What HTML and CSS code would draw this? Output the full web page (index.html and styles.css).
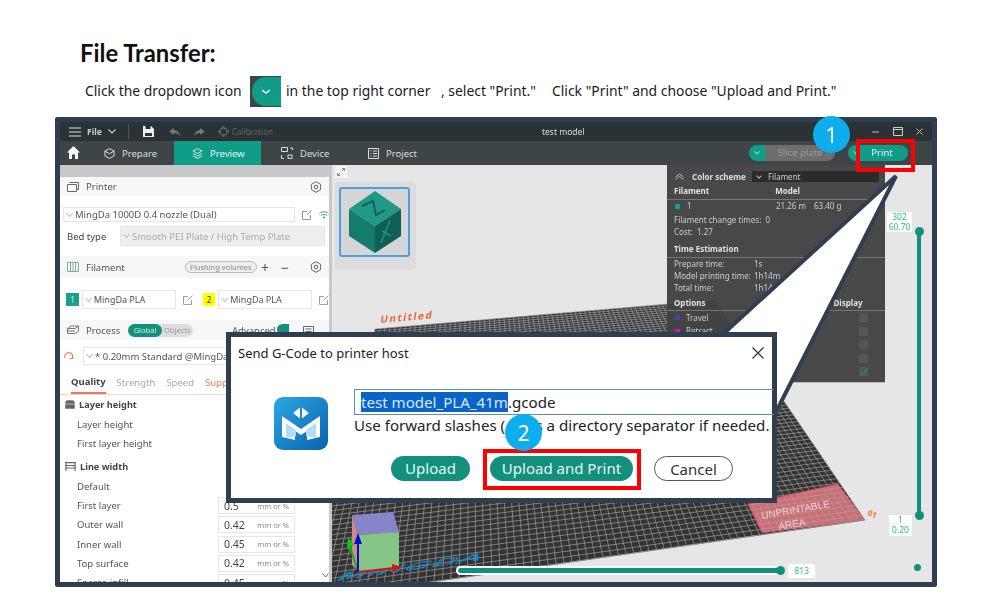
FILE: index.html
```html
<!DOCTYPE html>
<html lang="en">

<head>
    <meta charset="UTF-8">
    <title>File Transfer</title>
    <link rel="stylesheet" href="styles.css">
</head>

<body>
    <div class="page">
        <h1>File Transfer:</h1>
        <div class="steps">
            <span class="step-a">Click the dropdown icon</span>
            <span class="drop-sample"><i></i><svg width="10" height="6" viewBox="0 0 10 6"><path d="M1 1l4 3 4-3" fill="none" stroke="#fff" stroke-width="1.4"/></svg></span>
            <span class="step-b">in the top right corner</span>
            <span class="step-c">, select "Print."</span>
            <span class="step-d">Click "Print" and choose "Upload and Print."</span>
        </div>

        <div class="window">
            <!-- title bar -->
            <div class="titlebar">
                <svg class="tb-burger" width="12" height="10" viewBox="0 0 12 10"><path d="M0 1h12M0 5h12M0 9h12" stroke="#ddd" stroke-width="1.2"/></svg>
                <span class="tb-file">File</span>
                <svg class="tb-chev" width="8" height="5" viewBox="0 0 8 5"><path d="M.5 .5L4 4 7.500 .5" fill="none" stroke="#ccc" stroke-width="1.2"/></svg>
                <span class="tb-sep"></span>
                <svg class="tb-save" width="11" height="11" viewBox="0 0 11 11"><path d="M0 0h8l3 3v8H0z" fill="#eee"/><path d="M2.500 0h5v3h-5z M2 7h7v3H2z" fill="#2a3236"/></svg>
                <svg class="tb-undo" width="11" height="8" viewBox="0 0 11 8"><path d="M5 0L0 3.500 5 7V5c2.500 0 4 .6 6 3-.4-3.500-2.500-5.500-6-6z" fill="#777"/></svg>
                <svg class="tb-redo" width="11" height="8" viewBox="0 0 11 8"><path d="M6 0l5 3.500L6 7V5C3.500 5 2 5.600 0 8c.4-3.500 2.500-5.500 6-6z" fill="#777"/></svg>
                <svg class="tb-gear" width="11" height="11" viewBox="0 0 11 11"><circle cx="5.500" cy="5.500" r="3.600" fill="none" stroke="#666" stroke-width="1.500"/><path d="M5.500 0v2M5.500 9v2M0 5.500h2M9 5.500h2" stroke="#666" stroke-width="1.800"/></svg>
                <span class="tb-calib">Calibration</span>
                <span class="tb-title">test model</span>
                <svg class="tb-min" width="7" height="2" viewBox="0 0 7 2"><path d="M0 1h7" stroke="#bbb"/></svg>
                <svg class="tb-max" width="10" height="9" viewBox="0 0 10 9"><path d="M.5 .5h9v8h-9zM.5 2.500h9" fill="none" stroke="#ccc"/></svg>
                <svg class="tb-close" width="7" height="7" viewBox="0 0 7 7"><path d="M.5 .5l6 6M6.500 .5l-6 6" stroke="#bbb"/></svg>
            </div>

            <!-- tab bar -->
            <div class="tabbar">
                <svg class="home" width="13" height="13" viewBox="0 0 13 13"><path d="M6.500 0L13 6.500h-2V13H8V8.500H5V13H2V6.500H0z" fill="#fff"/></svg>
                <div class="tab tab-prepare"><svg width="11" height="11" viewBox="0 0 11 11"><path d="M5.500 .6l4.600 2.500v4.800L5.500 10.400 .9 7.900V3.100zM.9 3.100l4.600 2.600 4.600-2.600" fill="none" stroke="#ddd"/></svg>Prepare</div>
                <div class="tab tab-preview"><svg width="11" height="11" viewBox="0 0 11 11"><path d="M5.500 .6l4.600 2.400-4.600 2.400L.9 3zM.9 5.500l4.600 2.400 4.600-2.400M.9 8l4.600 2.400L10.100 8" fill="none" stroke="#cdeee8"/></svg>Preview</div>
                <div class="tab tab-device"><svg width="12" height="12" viewBox="0 0 12 12"><path d="M.5 .5h6v4h-6zM7 8h4v3.500H7zM9 1h2.500v2M.5 8v3.500H3" fill="none" stroke="#ddd"/></svg>Device</div>
                <div class="tab tab-project"><svg width="11" height="11" viewBox="0 0 11 11"><path d="M.5 .5h10v10H.5zM2.500 3h1M5 3h4M2.500 5.500h1M5 5.500h4M2.500 8h1M5 8h4" fill="none" stroke="#ddd"/></svg>Project</div>
                <div class="slice-btn"><span class="btn-drop"><svg width="6" height="4" viewBox="0 0 6 4"><path d="M.5 .5L3 3 5.500 .5" fill="none" stroke="#fff"/></svg></span><span class="slice-label">Slice plate</span></div>
                <div class="print-btn"><span class="btn-drop"><svg width="6" height="4" viewBox="0 0 6 4"><path d="M.5 .5L3 3 5.500 .5" fill="none" stroke="#fff"/></svg></span><span class="print-label">Print</span></div>
            </div>

            <div class="main">
                <!-- left settings panel -->
                <div class="side">
                    <div class="side-strip"></div>
                    <div class="side-head head-printer">
                        <svg width="12" height="10" viewBox="0 0 12 10"><path d="M2.500 .5h9v7h-2M.5 2.500h9v7h-9z" fill="none" stroke="#667"/></svg>
                        <span>Printer</span>
                        <svg class="cog" width="12" height="12" viewBox="0 0 12 12"><path d="M6 .7l4.600 2.650v5.300L6 11.300 1.400 8.650v-5.300z" fill="none" stroke="#666"/><circle cx="6" cy="6" r="1.800" fill="none" stroke="#666"/></svg>
                    </div>
                    <div class="printer-row">
                        <div class="select select-printer"><em></em>MingDa 1000D 0.4 nozzle (Dual)</div>
                        <svg class="edit" width="10" height="10" viewBox="0 0 10 10"><path d="M8.500 5v4.500h-8v-8H5M5 5l4.500-4.500" fill="none" stroke="#999"/></svg>
                        <svg class="wifi" width="10" height="8" viewBox="0 0 10 8"><path d="M.5 2.500c2.500-2.300 6.500-2.300 9 0M2.200 4.500c1.500-1.300 4.100-1.300 5.600 0" fill="none" stroke="#17a58e"/><circle cx="5" cy="6.500" r="1" fill="#17a58e"/></svg>
                    </div>
                    <div class="bed-row">
                        <span class="bed-label">Bed type</span>
                        <div class="select select-bed"><em></em>Smooth PEI Plate / High Temp Plate</div>
                    </div>
                    <div class="side-head head-filament">
                        <svg width="12" height="10" viewBox="0 0 12 10"><path d="M.5 .5h11v9H.5zM3.500 .5v9M6 .5v9M8.500 .5v9" fill="none" stroke="#8aa"/></svg>
                        <span>Filament</span>
                        <span class="flush">Flushing volumes</span>
                        <span class="plus">+</span>
                        <span class="minus">−</span>
                        <svg class="cog" width="12" height="12" viewBox="0 0 12 12"><path d="M6 .7l4.600 2.650v5.300L6 11.300 1.400 8.650v-5.300z" fill="none" stroke="#666"/><circle cx="6" cy="6" r="1.800" fill="none" stroke="#666"/></svg>
                    </div>
                    <div class="filament-row">
                        <span class="chip chip-one">1</span>
                        <div class="select select-fil"><em></em>MingDa PLA</div>
                        <svg class="edit" width="10" height="10" viewBox="0 0 10 10"><path d="M8.500 5v4.500h-8v-8H5M5 5l4.500-4.500" fill="none" stroke="#999"/></svg>
                        <span class="chip chip-two">2</span>
                        <div class="select select-fil"><em></em>MingDa PLA</div>
                        <svg class="edit" width="10" height="10" viewBox="0 0 10 10"><path d="M8.500 5v4.500h-8v-8H5M5 5l4.500-4.500" fill="none" stroke="#999"/></svg>
                    </div>
                    <div class="side-head head-process">
                        <svg width="12" height="10" viewBox="0 0 12 10"><path d="M.5 3.500L4 1h7.500L8 3.500zM.5 3.500v2.500h7.500M.5 6v2.500h7.500l3.500-2.500V1" fill="none" stroke="#777"/></svg>
                        <span>Process</span>
                        <div class="toggle-pair"><b>Global</b><i>Objects</i></div>
                        <span class="advanced">Advanced</span>
                        <span class="adv-switch"></span>
                        <svg class="adv-icon" width="11" height="9" viewBox="0 0 11 9"><path d="M.5 .5h10v8H.5zM2.500 3h6M2.500 5.500h6" fill="none" stroke="#666"/></svg>
                    </div>
                    <div class="preset-row">
                        <svg width="10" height="10" viewBox="0 0 10 10"><path d="M1 7a4 4 0 1 1 7.500 0M8.500 4.500V7.500H6" fill="none" stroke="#f0765a" stroke-width="1.100"/></svg>
                        <div class="select select-preset"><em></em>* 0.20mm Standard @MingDa 1000D</div>
                    </div>
                    <div class="tabs-small">
                        <span class="on">Quality</span>
                        <span>Strength</span>
                        <span>Speed</span>
                        <span class="warn">Support</span>
                    </div>
                    <div class="group-head"><svg width="10" height="9" viewBox="0 0 10 9"><path d="M2 0h6l2 2v7H0V2zM0 4h10" fill="#666" stroke="#fff" stroke-width=".5"/></svg>Layer height</div>
                    <div class="param"><span>Layer height</span></div>
                    <div class="param"><span>First layer height</span></div>
                    <div class="group-head"><svg width="11" height="9" viewBox="0 0 11 9"><path d="M0 .6h11M0 3.500h11M0 6h11M1 .6V9M10 .6V9" fill="none" stroke="#666" stroke-width="1.100"/></svg>Line width</div>
                    <div class="param"><span>Default</span></div>
                    <div class="param"><span>First layer</span><div class="num">0.5<small>mm or %</small></div></div>
                    <div class="param"><span>Outer wall</span><div class="num">0.42<small>mm or %</small></div></div>
                    <div class="param"><span>Inner wall</span><div class="num">0.45<small>mm or %</small></div></div>
                    <div class="param"><span>Top surface</span><div class="num">0.42<small>mm or %</small></div></div>
                    <div class="param"><span>Sparse infill</span><div class="num">0.45<small>mm or %</small></div></div>
                    <svg class="side-more" width="7" height="5" viewBox="0 0 7 5"><path d="M.5 .5L3.500 4 6.500 .5" fill="none" stroke="#666"/></svg>
                </div>

                <!-- 3d view -->
                <div class="view">
                    <svg class="scene" width="600" height="418" viewBox="0 0 600 418">
                        <polygon points="43,164 383,135 533,355 -27,435" fill="#333"/>
                        <polygon points="416,339 506,319 533,355 430,368" fill="#cf6b73"/>
                        <g id="bed-grid" stroke="#a4a4a4" stroke-width=".65"></g>
                        <path d="M416 339L506 319M416 339L430 368" stroke="#e0404a" fill="none"/>
                        <path d="M533 355L-27 435" stroke="#8a8a8a"/>
                        <text class="bed-title" transform="translate(48 158) rotate(-5) skewX(-14)">Untitled</text>
                        <text class="bed-brand" transform="matrix(2.500 -.36 -1 .9 3 416)">MINGDA</text>
                        <text class="bed-warn" transform="translate(430 354) rotate(-10)">UNPRINTABLE</text>
                        <text class="bed-warn" transform="translate(447 365) rotate(-10)">AREA</text>
                        <text class="bed-num" transform="translate(535 350) rotate(22)">01</text>
                        <polygon points="20,350 61,347 67,367 26,370" fill="#8585c8"/>
                        <polygon points="20,350 26,370 26,405 20,400" fill="#d08a8a"/>
                        <polygon points="26,370 67,367 67,403 26,407" fill="#85c585"/>
                        <path d="M26 406L18 382" stroke="#0fb40f" stroke-width="2"/>
                        <polygon points="15,384 22,380 16,372" fill="#0fc80f"/>
                        <path d="M26 407V376" stroke="#0a0ad2" stroke-width="2"/>
                        <polygon points="22,379 30,379 26,368" fill="#0a0ad2"/>
                        <path d="M26 407L62 403" stroke="#d21414" stroke-width="2"/>
                        <polygon points="60,399 60,407 70,402" fill="#d21414"/>
                    </svg>

                    <div class="expand"><svg width="8" height="8" viewBox="0 0 8 8"><path d="M.5 7.500L3 5M5 3l2.500-2.500M5 .5h2.500V3M.5 5v2.500H3" fill="none" stroke="#888"/></svg></div>
                    <div class="thumbs">
                        <div class="thumb">
                            <svg width="54" height="62" viewBox="0 0 54 62">
                                <polygon points="27,0 53,18 27,35 1,18" fill="#209a87"/>
                                <polygon points="1,18 27,35 27,62 1,45" fill="#157c6d"/>
                                <polygon points="53,18 27,35 27,62 53,45" fill="#0f5f54"/>
                                <path d="M14 15l11-5 3 14 9-5" fill="none" stroke="#0f5f54" stroke-width="2"/>
                                <path d="M42 29L33 52M34 40l9 5" fill="none" stroke="#20917f" stroke-width="1.500"/>
                            </svg>
                        </div>
                    </div>

                    <div class="scheme">
                        <div class="scheme-top"><svg width="9" height="7" viewBox="0 0 9 7"><path d="M.5 4L4.500 1 8.500 4M.5 6.500l4-3 4 3" fill="none" stroke="#bbb"/></svg><b>Color scheme</b><div class="scheme-select"><em></em>Filament</div></div>
                        <div class="s-row s-h s-line"><b>Filament</b><b class="c-model">Model</b></div>
                        <div class="s-row"><i class="swatch teal"></i><span class="c-one">1</span><span class="c-len">21.26 m</span><span>63.40 g</span></div>
                        <div class="s-row s-sub"><span>Filament change times:&nbsp; 0</span></div>
                        <div class="s-row"><span>Cost:&nbsp; 1.27</span></div>
                        <div class="s-row s-h s-line s-gap"><b>Time Estimation</b></div>
                        <div class="s-row"><span class="c-name">Prepare time:</span><span>1s</span></div>
                        <div class="s-row"><span class="c-name">Model printing time:</span><span>1h14m</span></div>
                        <div class="s-row"><span class="c-name">Total time:</span><span>1h14m</span></div>
                        <div class="s-row s-h s-line s-gap2"><b>Options</b><b class="c-display">Display</b></div>
                        <div class="s-opt"><i class="swatch blue"></i><span>Travel</span><u></u></div>
                        <div class="s-opt"><i class="swatch pink"></i><span>Retract</span><u></u></div>
                        <div class="s-opt"><span></span><u></u></div>
                        <div class="s-opt"><span></span><u></u></div>
                        <div class="s-opt"><span></span><u class="checked"><svg width="8" height="7" viewBox="0 0 8 7"><path d="M.5 3.500l2.500 2.500 4.500-5.500" fill="none" stroke="#12907c" stroke-width="1.300"/></svg></u></div>
                    </div>

                    <div class="tag tag-top">302<br>60.70</div>
                    <div class="tag tag-low">1<br>0.20</div>
                    <div class="vbar"></div>
                    <div class="vknob vknob-top"></div>
                    <div class="vknob vknob-low"></div>
                    <div class="hbar"></div>
                    <div class="hknob"></div>
                    <div class="tag tag-layer">813</div>
                    <div class="layers-dot"></div>
                </div>
            </div>
        </div>

        <!-- annotations over the screenshot -->
        <svg class="callout" width="1000" height="600" viewBox="0 0 1000 600"><polygon points="896,176 722,335 777,410" fill="#fff" stroke="#2f3e50" stroke-width="4"/></svg>
        <div class="red-box red-print"></div>
        <div class="badge badge-one">1</div>

        <div class="dialog">
            <div class="dlg-head">
                <span>Send G-Code to printer host</span>
                <svg width="12" height="12" viewBox="0 0 12 12"><path d="M.5 .5l11 11M11.500 .5l-11 11" stroke="#333" stroke-width="1.200"/></svg>
            </div>
            <div class="dlg-body">
                <svg class="dlg-logo" width="54" height="53" viewBox="0 0 54 53">
                    <defs><linearGradient id="logo-fill" x1="0" y1="0" x2="1" y2="1"><stop offset="0" stop-color="#2ba8e4"/><stop offset="1" stop-color="#0763ad"/></linearGradient></defs>
                    <rect width="54" height="53" rx="9" fill="url(#logo-fill)"/>
                    <path d="M26 10.500v11l-7-5.500zM28 10.500v11l7-5.500z" fill="#fff"/>
                    <path d="M8 19l19 13 19-13v21l-13 3v-9l-6 4-6-4v9L8 40z" fill="#fff"/>
                    <path d="M12 26l10 7v6l-10 2zM42 26l-10 7v6l10 2z" fill="#b5dcf2"/>
                </svg>
                <div class="dlg-form">
                    <div class="dlg-input"><span class="picked">test model_PLA_41m</span>.gcode</div>
                    <div class="dlg-hint">Use forward slashes ( / ) as a directory separator if needed.</div>
                </div>
            </div>
            <div class="dlg-actions">
                <span class="pill pill-upload">Upload</span>
                <span class="pill pill-both">Upload and Print</span>
                <span class="pill pill-cancel">Cancel</span>
            </div>
        </div>
        <div class="red-box red-upload"></div>
        <div class="badge badge-two">2</div>
    </div>

    <script src="grid.js"></script>
</body>

</html>
```

FILE: styles.css
```css
* {
    box-sizing: border-box;
}

body {
    margin: 0;
    background-color: #fff;
    font-family: "Noto Sans", "Liberation Sans", sans-serif;
    color: #222;
}

.page {
    position: relative;
    width: 1000px;
    height: 600px;
    overflow: hidden;
    padding-top: 38px;
}

h1 {
    margin: 0 0 0 80px;
    height: 30px;
    line-height: 30px;
    font-family: Lato, "Liberation Sans", sans-serif;
    font-size: 23.800px;
    font-weight: 700;
    color: #111;
}

.steps {
    display: flex;
    align-items: center;
    height: 31px;
    margin-top: 8px;
    font-size: 13.900px;
    color: #1a1a1a;
}

.steps span:not(.drop-sample) {
    padding-bottom: 2px;
}

.step-a {
    margin-left: 85px;
    width: 165px;
}

.step-b {
    margin-left: 5px;
    width: 155px;
}

.step-c {
    width: 111px;
}

.drop-sample {
    position: relative;
    display: flex;
    align-items: center;
    justify-content: center;
    width: 31px;
    height: 31px;
    background-color: #3d4547;
}

.drop-sample i {
    position: absolute;
    left: 2px;
    top: 1px;
    width: 29px;
    height: 29px;
    background-color: #0f9d87;
    border-radius: 14px 0 0 14px;
}

.drop-sample svg {
    position: relative;
}

.window {
    width: 882px;
    height: 470px;
    margin: 10px 0 0 55px;
    border: 5px solid #2f3e50;
    border-radius: 2px;
    display: flex;
    flex-direction: column;
    overflow: hidden;
    filter: blur(.35px);
}

.titlebar {
    flex: none;
    display: flex;
    align-items: center;
    height: 19px;
    background-color: #2a3236;
    font-size: 8.500px;
    color: #ccc;
    position: relative;
}

.tb-burger { margin-left: 9px; }
.tb-file { margin-left: 6px; width: 18px; font-weight: 700; }
.tb-chev { margin-left: 3px; }
.tb-sep { margin-left: 12px; width: 1px; height: 15px; background-color: #555; }
.tb-save { margin-left: 14px; }
.tb-undo { margin-left: 15px; }
.tb-redo { margin-left: 14px; }
.tb-gear { margin-left: 13px; }
.tb-calib { margin-left: 3px; font-size: 8px; color: #666; }

.tb-title {
    position: absolute;
    left: 482px;
    color: #ddd;
}

.tb-min { margin-left: auto; margin-right: 14px; }
.tb-max { margin-right: 13px; }
.tb-close { margin-right: 9px; }

.tabbar {
    flex: none;
    display: flex;
    align-items: stretch;
    height: 24px;
    background-color: #3d4547;
    font-size: 9.500px;
    color: #ddd;
}

.home {
    margin: 5px 0 0 7px;
}

.tab {
    display: flex;
    align-items: center;
    gap: 7px;
}

.tab-prepare { margin-left: 24px; width: 70px; }
.tab-preview { width: 87px; padding-left: 18px; background-color: #0f9d87; color: #e6f6f3; }
.tab-device { margin-left: 20px; width: 87px; }
.tab-project { margin-left: 0; width: 80px; }

.slice-btn,
.print-btn {
    display: flex;
    align-items: center;
    height: 16px;
    align-self: center;
}

.slice-btn { margin-left: 301px; }
.print-btn { margin-left: 13px; }

.btn-drop {
    display: flex;
    align-items: center;
    justify-content: center;
    width: 16px;
    height: 16px;
    background-color: #0f9d87;
    border-radius: 8px 0 0 8px;
}

.slice-label {
    width: 70px;
    height: 16px;
    line-height: 16px;
    text-align: center;
    color: #999;
    background-color: #6d6d6d;
    border-radius: 0 8px 8px 0;
}

.print-label {
    width: 44px;
    height: 16px;
    line-height: 16px;
    text-align: center;
    padding-right: 8px;
    color: #e6f6f3;
    background-color: #0f9d87;
    border-radius: 0 8px 8px 0;
}

.main {
    flex: 1;
    display: flex;
    min-height: 0;
}

/* left panel */
.side {
    position: relative;
    flex: none;
    width: 272px;
    background-color: #fff;
    border-right: 3px solid #c9c9c9;
    font-size: 9.500px;
    color: #555;
    overflow: hidden;
}

.side-strip {
    height: 12px;
    background-color: #c8c8c8;
}

.side-head {
    display: flex;
    align-items: center;
    background-color: #f7f7f7;
    padding-left: 7px;
    font-size: 9.500px;
    color: #555;
}

.side-head > span:first-of-type {
    margin-left: 7px;
}

.head-printer { height: 19px; }
.head-filament { height: 22px; margin-top: 10px; }
.head-process { height: 20px; margin-top: 11px; position: relative; }

.cog {
    position: absolute;
    left: 250px;
}

.select {
    display: flex;
    align-items: center;
    height: 15px;
    border: 1px solid #e6e6e6;
    background-color: #fff;
    color: #555;
    white-space: nowrap;
    overflow: hidden;
}

.select em {
    flex: none;
    width: 5px;
    height: 5px;
    margin: -3px 3px 0 3px;
    border-right: 1px solid #bbb;
    border-bottom: 1px solid #bbb;
    transform: rotate(45deg);
}

.printer-row {
    display: flex;
    align-items: center;
    height: 15px;
    margin-top: 11px;
    padding-left: 3px;
}

.select-printer { width: 233px; }
.printer-row .edit { margin-left: 7px; }
.printer-row .wifi { margin-left: 7px; }

.bed-row {
    display: flex;
    align-items: center;
    height: 20px;
    margin-top: 4px;
}

.bed-label {
    width: 60px;
    padding-left: 7px;
    color: #444;
}

.select-bed {
    width: 205px;
    height: 20px;
    background-color: #eee;
    color: #aaa;
}

.flush {
    position: absolute;
    left: 125px;
    font-size: 7.500px;
    color: #888;
    border: 1px solid #bbb;
    border-radius: 6px;
    padding: 0 4px;
    background-color: #eee;
}

.head-filament {
    position: relative;
}

.plus { position: absolute; left: 201px; font-size: 14px; }
.minus { position: absolute; left: 221px; font-size: 14px; }

.filament-row {
    display: flex;
    align-items: center;
    height: 19px;
    margin-top: 12px;
    padding-left: 6px;
    font-size: 9px;
}

.chip {
    width: 13px;
    height: 13px;
    line-height: 13px;
    text-align: center;
    font-size: 8px;
}

.chip-one { background-color: #1ba08b; color: #cfeee9; }
.chip-two { background-color: #ffff00; color: #333; margin-left: 10px; }
.select-fil { width: 95px; height: 19px; margin-left: 3px; }
.filament-row .edit { margin-left: 7px; }

.toggle-pair {
    position: absolute;
    left: 68px;
    display: flex;
    height: 13px;
    line-height: 13px;
    font-size: 7.500px;
    background-color: #ddd;
    border-radius: 7px;
}

.toggle-pair b {
    font-weight: 400;
    width: 34px;
    text-align: center;
    color: #d5efea;
    background-color: #12907c;
    border-radius: 7px;
}

.toggle-pair i {
    font-style: normal;
    color: #999;
    width: 31px;
    padding-left: 2px;
}

.advanced { position: absolute; left: 172px; }

.adv-switch {
    position: absolute;
    left: 217px;
    top: 4px;
    width: 18px;
    height: 11px;
    border-radius: 6px;
    background-color: #12907c;
    border-right: 6px solid #fff;
}

.adv-icon { position: absolute; left: 243px; }

.preset-row {
    display: flex;
    align-items: center;
    gap: 9px;
    height: 18px;
    margin-top: 7px;
    padding-left: 4px;
}

.select-preset { width: 200px; height: 18px; color: #555; }

.tabs-small {
    display: flex;
    gap: 11px;
    height: 26px;
    margin-top: 4px;
    padding: 6px 0 0 11px;
    border-bottom: 1px solid #ddd;
    color: #aaa;
    line-height: 16px;
}

.tabs-small .on {
    color: #444;
    font-weight: 700;
    border-bottom: 2px solid #f0765a;
    height: 20px;
    margin-top: -1px;
}

.tabs-small .warn { color: #f0765a; }

.group-head {
    display: flex;
    align-items: center;
    gap: 4px;
    height: 17px;
    margin-top: 1px;
    padding-left: 5px;
    font-size: 9.200px;
    color: #444;
    font-weight: 700;
}

.param {
    display: flex;
    align-items: center;
    justify-content: space-between;
    height: 19.300px;
    padding: 0 34px 0 17px;
}

.group-head + .param {
    margin-top: 2px;
}

.param + .group-head {
    margin-top: 4px;
}

.num {
    display: flex;
    align-items: center;
    justify-content: space-between;
    width: 77px;
    height: 17px;
    padding: 0 5px;
    border: 1px solid #e6e6e6;
    font-size: 10.500px;
    color: #444;
}

.num small {
    font-size: 7.500px;
    color: #888;
}

.side-more {
    position: absolute;
    left: 262px;
    bottom: 4px;
}

/* 3d view */
.view {
    position: relative;
    flex: 1;
    background-color: #e6e6e6;
    overflow: hidden;
}

.scene {
    position: absolute;
    left: 0;
    top: 0;
}

.bed-title {
    font-size: 10px;
    font-weight: 700;
    letter-spacing: 1.500px;
    fill: #f0603a;
}

.bed-brand {
    font-family: "Liberation Sans", sans-serif;
    font-size: 13px;
    letter-spacing: 1px;
    fill: none;
    stroke: #1a8fc9;
    stroke-width: .7;
}

.bed-warn {
    font-family: "Liberation Sans", sans-serif;
    font-size: 10px;
    fill: #f3d3d6;
}

.bed-num {
    font-size: 8px;
    font-weight: 700;
    fill: #f07a3a;
}

.expand {
    position: absolute;
    left: 3px;
    top: 1px;
    width: 12px;
    height: 12px;
    display: flex;
    align-items: center;
    justify-content: center;
    background-color: #f5f5f5;
}

.thumbs {
    position: absolute;
    left: 3px;
    top: 17px;
    width: 81px;
    height: 88px;
    padding: 5px 4px;
    background-color: #dcdcdc;
    border-radius: 3px;
}

.thumb {
    display: flex;
    align-items: center;
    justify-content: center;
    width: 71px;
    height: 70px;
    background-color: #d5d5d5;
    border: 2px solid #4a9fe8;
    border-radius: 3px;
}

.scheme {
    position: absolute;
    left: 335px;
    top: 0;
    width: 218px;
    height: 218px;
    padding: 6px 0 0 7px;
    background-color: rgba(66, 66, 66, .97);
    border-bottom: 1px solid #bbb;
    font-size: 8px;
    line-height: 12px;
    color: #ccc;
}

.scheme-top {
    display: flex;
    align-items: center;
    height: 11px;
    margin-bottom: 3px;
}

.scheme-top svg { margin-left: 1px; }
.scheme-top b { margin-left: 8px; color: #ddd; font-weight: 700; }

.scheme-select {
    display: flex;
    align-items: center;
    width: 127px;
    height: 11px;
    margin-left: 6px;
    background-color: #2b2b2b;
}

.scheme-select em {
    width: 4px;
    height: 4px;
    margin: -2px 7px 0 5px;
    border-right: 1px solid #bbb;
    border-bottom: 1px solid #bbb;
    transform: rotate(45deg);
}

.s-row {
    display: flex;
    align-items: center;
    height: 12px;
    white-space: nowrap;
}

.s-h b { color: #e2e2e2; font-weight: 700; }

.s-line {
    height: 15px;
    padding-bottom: 2px;
    margin: 0 0 0 -7px;
    padding-left: 7px;
    border-bottom: 1px solid #777;
}

.s-sub { margin-top: 2px; }
.s-gap { margin-top: 5px; }
.s-line.s-gap2 { margin-top: 3px; height: 14px; }

.c-model { margin-left: 66px; }
.c-display { margin-left: 128px; }
.c-one { width: 89px; margin-left: 7px; }
.c-len { width: 38px; }
.c-name { width: 80px; }

.swatch {
    flex: none;
    width: 5px;
    height: 5px;
    margin-left: 1px;
}

.teal { background-color: #12a08c; }
.blue { background-color: #3a48a8; margin-right: 6px; }
.pink { background-color: #d010d0; margin-right: 6px; }

.s-opt {
    position: relative;
    display: flex;
    align-items: center;
    height: 13.500px;
}

.s-opt u {
    position: absolute;
    left: 185px;
    top: 2px;
    width: 9px;
    height: 9px;
    background-color: #565656;
    display: flex;
    align-items: center;
    justify-content: center;
}

.tag {
    position: absolute;
    background-color: #fff;
    color: #27c77b;
    font-size: 8.500px;
    line-height: 10px;
    text-align: center;
}

.tag-top { left: 555px; top: 47px; width: 25px; height: 20px; }
.tag-low { left: 557px; top: 350px; width: 23px; height: 21px; }
.tag-layer { left: 456px; top: 399px; width: 27px; height: 14px; line-height: 14px; }

.vbar {
    position: absolute;
    left: 585px;
    top: 67px;
    width: 4px;
    height: 283px;
    background-color: #12907c;
}

.vknob,
.hknob {
    position: absolute;
    width: 9px;
    height: 9px;
    background-color: #12907c;
    border-radius: 50%;
}

.vknob-top { left: 583px; top: 62px; }
.vknob-low { left: 583px; top: 346px; }

.hbar {
    position: absolute;
    left: 124px;
    top: 401px;
    width: 325px;
    height: 9px;
    background-color: #12907c;
    border: 2px solid #fff;
    border-right: 0;
    border-radius: 5px 0 0 5px;
}

.hknob { left: 444px; top: 401px; }

.layers-dot {
    position: absolute;
    left: 582px;
    top: 399px;
    width: 7px;
    height: 7px;
    border-radius: 50%;
    background-color: #12907c;
}

/* annotations */
.callout {
    position: absolute;
    left: 0;
    top: 0;
    pointer-events: none;
}

.red-box {
    position: absolute;
    border: 4px solid #f00;
}

.red-print { left: 856px; top: 139px; width: 59px; height: 33px; }
.red-upload { left: 483px; top: 449px; width: 158px; height: 41px; }

.badge {
    position: absolute;
    display: flex;
    align-items: center;
    justify-content: center;
    width: 37px;
    height: 37px;
    border-radius: 50%;
    background-color: #0eaeee;
    color: #fff;
    font-size: 21px;
}

.badge-one { left: 813px; top: 116px; }
.badge-two { left: 505px; top: 414px; }

.dialog {
    position: absolute;
    left: 226px;
    top: 332px;
    width: 551px;
    height: 171px;
    background-color: #fff;
    border: 5px solid #2f3e50;
    color: #222;
}

.dlg-head {
    display: flex;
    align-items: center;
    justify-content: space-between;
    height: 31px;
    padding: 0 8px 0 7px;
    font-size: 13px;
}

.dlg-body {
    display: flex;
    margin-top: 21px;
}

.dlg-logo {
    flex: none;
    margin: 8px 26px 0 43px;
}

.dlg-form {
    width: 420px;
    flex: none;
}

.dlg-input {
    height: 26px;
    line-height: 24px;
    padding-left: 6px;
    border: 1px solid #5b8fb0;
    border-right: 0;
    font-size: 15.100px;
    white-space: nowrap;
}

.picked {
    background-color: #0a64c8;
    color: #d8e8fa;
}

.dlg-hint {
    font-size: 15.100px;
    line-height: 20px;
    white-space: nowrap;
}

.dlg-actions {
    position: absolute;
    left: 160px;
    top: 119px;
    display: flex;
    gap: 20px;
}

.pill {
    height: 25px;
    line-height: 24px;
    text-align: center;
    font-size: 15px;
    border-radius: 13px;
    color: #e6f6f3;
    background-color: #12907c;
}

.pill-upload { width: 79px; }
.pill-both { width: 143px; }

.pill-cancel {
    width: 79px;
    margin-left: 1px;
    background-color: #fff;
    border: 1px solid #555;
    color: #333;
}
```

FILE: grid.js
```js
// perspective grid for the print bed
var corners = [[43, 164], [383, 135], [533, 355], [-27, 435]];
var cells = 72;

function bedPoint(u, v) {
    var p = corners;
    var dx1 = p[1][0] - p[2][0], dx2 = p[3][0] - p[2][0], sx = p[0][0] - p[1][0] + p[2][0] - p[3][0];
    var dy1 = p[1][1] - p[2][1], dy2 = p[3][1] - p[2][1], sy = p[0][1] - p[1][1] + p[2][1] - p[3][1];
    var det = dx1 * dy2 - dx2 * dy1;
    var g = (sx * dy2 - dx2 * sy) / det;
    var h = (dx1 * sy - sx * dy1) / det;
    var w = g * u + h * v + 1;
    var x = (p[1][0] - p[0][0] + g * p[1][0]) * u + (p[3][0] - p[0][0] + h * p[3][0]) * v + p[0][0];
    var y = (p[1][1] - p[0][1] + g * p[1][1]) * u + (p[3][1] - p[0][1] + h * p[3][1]) * v + p[0][1];
    return [x / w, y / w];
}

var d = '';
for (var i = 0; i <= cells; i++) {
    var t = i / cells;
    var a = bedPoint(t, 0), b = bedPoint(t, 1), c = bedPoint(0, t), e = bedPoint(1, t);
    d += 'M' + a[0] + ' ' + a[1] + 'L' + b[0] + ' ' + b[1];
    d += 'M' + c[0] + ' ' + c[1] + 'L' + e[0] + ' ' + e[1];
}

var path = document.createElementNS('http://www.w3.org/2000/svg', 'path');
path.setAttribute('d', d);
document.getElementById('bed-grid').appendChild(path);
```
